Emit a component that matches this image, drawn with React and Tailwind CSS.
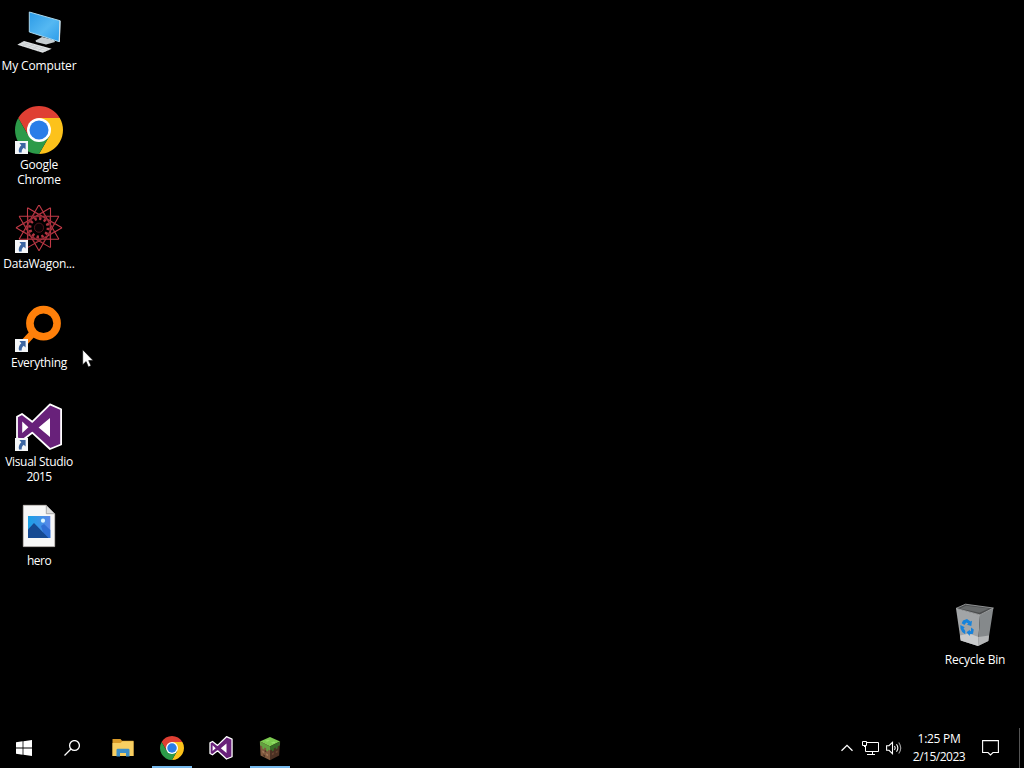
import React from "react";

const FONT = "font-['Open_Sans','Noto_Sans',sans-serif]";

function Computer() {
  return (
    <svg viewBox="0 0 48 48" className="size-12">
      <defs>
        <linearGradient id="screen" x1="0" y1="0" x2="1" y2="1">
          <stop offset="0" stopColor="#2b9ae6" />
          <stop offset=".55" stopColor="#55b8f2" />
          <stop offset="1" stopColor="#2a9bea" />
        </linearGradient>
      </defs>
      <path d="M20.5 33.5 L27 30 L39 33 L40 35 L31 37.5 L21 35Z" fill="#c6cdd1" />
      <path d="M14.3 5 L45 13.7 L44.3 34.7 L14.3 25Z" fill="url(#screen)" stroke="#a9d7ee" strokeWidth="1" />
      <path d="M45 13.7 L44.3 34.7" stroke="#d6e3ea" strokeWidth="1.2" />
      <path d="M9 34 L36.7 41.7 L27.7 45.7 L2.3 37.7Z" fill="#dfe2e4" />
      <path d="M6.8 35.2 L33.8 43 M4.5 36.5 L30.8 44.4 M14 35.5 L7.5 39.2 M19 37 L12.5 40.8 M24 38.2 L17.5 42.4 M29 39.7 L22.5 44" stroke="#b9bec1" strokeWidth=".5" />
    </svg>
  );
}

function Chrome({ className }) {
  return (
    <svg viewBox="0 0 48 48" className={className}>
      <path d="M3.22 12 A24 24 0 0 1 44.78 12 L24 12 L13.61 30Z" fill="#df3f33" />
      <path d="M44.78 12 A24 24 0 0 1 24 48 L34.39 30 L24 12Z" fill="#fcc21b" />
      <path d="M24 48 A24 24 0 0 1 3.22 12 L13.61 30 L34.39 30Z" fill="#2c9a49" />
      <circle cx="24" cy="24" r="12" fill="#fff" />
      <circle cx="24" cy="24" r="9.5" fill="#2a7de8" />
    </svg>
  );
}

function ring(count, skip, radius, turn) {
  const at = (i) => {
    const a = ((i + turn) * 2 * Math.PI) / count;
    return `${(24 + radius * Math.cos(a)).toFixed(2)} ${(22.7 + radius * Math.sin(a)).toFixed(2)}`;
  };
  return Array.from({ length: count }, (_, i) => `M${at(i)} L${at(i + skip)}`).join(" ");
}

function DataWagon() {
  return (
    <svg viewBox="0 0 48 48" className="size-12" fill="none">
      <path d={ring(12, 4, 23, 0)} stroke="#c23a47" strokeWidth="1.1" />
      <path d={ring(12, 3, 15.5, 0.5)} stroke="#8a2530" strokeWidth=".7" />
      <circle cx="24" cy="22.7" r="9.2" stroke="#b03340" strokeWidth="3" strokeDasharray="2.4 2.4" />
      <circle cx="24" cy="22.7" r="4.6" fill="#0b0204" stroke="#7d1f2b" strokeWidth=".6" />
    </svg>
  );
}

function Everything() {
  return (
    <svg viewBox="0 0 48 48" className="size-12" fill="none" stroke="#ff800a">
      <path d="M19 28 L6 42" strokeWidth="7" />
      <circle cx="28.5" cy="19.2" r="13.6" strokeWidth="7.6" />
    </svg>
  );
}

function VisualStudio({ className, edge = 1.8 }) {
  return (
    <svg viewBox="0 0 48 48" className={className}>
      <path
        fillRule="evenodd"
        d="M35 1.4 L46.1 6.3 V41.5 L35 46 L17.2 29.7 L7 37.5 L2 35 V13.8 L7 11 L17.2 18.8Z"
        fill="#68217a" stroke="#fff" strokeWidth={edge} strokeLinejoin="round"
      />
      <path d="M7.2 18.4 V30 L13.4 24.3Z M35 15 V34 L23.6 24.6Z" fill="#fff" />
    </svg>
  );
}

function ImageFile() {
  return (
    <svg viewBox="0 0 48 48" className="size-12">
      <defs>
        <linearGradient id="sky" x1="0" x2="1">
          <stop offset="0" stopColor="#19a1e6" />
          <stop offset="1" stopColor="#5a86e8" />
        </linearGradient>
      </defs>
      <path d="M8.3 3.3 H31.3 L39.7 11.7 V44.6 H8.3Z" fill="#f7f7f7" stroke="#cfc9c4" strokeWidth=".7" />
      <path d="M31.3 3.3 V11.7 H39.7Z" fill="#dedede" stroke="#8f8f8f" strokeWidth=".7" />
      <rect x="13" y="14" width="22.3" height="22" fill="url(#sky)" />
      <path d="M26 24 L29 22 L35.3 28 V36 H30Z" fill="#2f6fd4" />
      <path d="M13 27.5 L19 21 L33.5 36 H13Z" fill="#164a92" />
      <circle cx="28" cy="18.7" r="2.1" fill="#d8f4ff" />
    </svg>
  );
}

function RecycleBin() {
  return (
    <svg viewBox="0 0 48 48" className="size-12">
      <path d="M5 7.4 L14.5 3.2 L42.4 7 L29 13.9Z" fill="#4b4d4e" />
      <path d="M9 7.6 L15 4.8 L38 7.6 L28.5 11.8Z" fill="#66696a" />
      <path d="M5 7.4 L29 13.9 L27 45 L9.7 39.5Z" fill="#a2a5a7" />
      <path d="M29 13.9 L42.4 7 L37.3 40 L27 45Z" fill="#85898b" />
      <path d="M9 34.5 L18 32.4 L27.6 36 L27 45 L9.7 39.5Z" fill="#c9cbcc" />
      <path d="M27.6 36 L38 34.5 L37.3 40 L27 45Z" fill="#b4b6b7" />
      <path d="M5 7.4 L14.5 3.2 L42.4 7 L29 13.9Z" fill="none" stroke="#a9acad" strokeWidth=".8" />
      <g fill="#1683dc">
        <path d="M12 19.5 L16 18 L19.5 20.5 L21 19.8 L20.3 25 L16 23.8 L17.3 22.6 L15.3 21.4 L13.4 24 L10.7 22.3Z" />
        <path d="M9.3 24 L13.8 26.3 L12.5 27.2 L14.3 30 L14.2 33.3 L11.2 31 L9.5 27.6Z" />
        <path d="M20 26.4 L22.8 28.5 L22 32.8 L18.8 33.3 V35 L15.5 31.3 L18.8 28.7 V30.2 L20 30Z" />
      </g>
    </svg>
  );
}

function ShortcutArrow() {
  return (
    <svg viewBox="0 0 13 13" className="absolute bottom-0 left-0 size-[13px]">
      <rect width="13" height="13" fill="#f4f6f8" />
      <path d="M4.4 2 H10.6 V8.4 L8.7 6.7 C7.2 8 6.6 9.4 6.7 11.4 H4 C3.2 8.4 4.3 6.2 6.3 4.3Z" fill="#3c66a2" />
    </svg>
  );
}

function DesktopItem({ icon, lines, shortcut }) {
  return (
    <div className="flex h-[99px] w-[78px] shrink-0 flex-col items-center pt-[7px]">
      <div className="relative size-12">
        {icon}
        {shortcut && <ShortcutArrow />}
      </div>
      <div className="mt-[3px] flex flex-col items-center text-[12px] leading-[15px] whitespace-nowrap text-white">
        {lines.map(([text, tracking]) => (
          <span key={text} className={tracking}>{text}</span>
        ))}
      </div>
    </div>
  );
}

function WindowsLogo() {
  return (
    <svg viewBox="0 0 16 16" className="size-4" fill="#fff">
      <path d="M0 2.2 L6.6 1.3 V7.6 H0Z M7.4 1.2 L16 0 V7.6 H7.4Z M0 8.4 H6.6 V14.7 L0 13.8Z M7.4 8.4 H16 V16 L7.4 14.8Z" />
    </svg>
  );
}

function SearchIcon() {
  return (
    <svg viewBox="0 0 16 16" className="size-4" fill="none" stroke="#fff" strokeWidth="1.3">
      <circle cx="10.5" cy="5.5" r="4.9" />
      <path d="M7 9 L.5 15.5" />
    </svg>
  );
}

function Explorer() {
  return (
    <svg viewBox="0 0 22 18" className="h-[18px] w-[22px]">
      <path d="M.5 0 H8.5 L10 1.8 H21.5 V17 H.5Z" fill="#d99a28" />
      <path d="M.5 4 H8.5 L10.5 2.2 H21.5 V17 H.5Z" fill="#f8cf62" />
      <path d="M4.5 17.5 V11 Q4.5 9.7 5.8 9.7 H16.2 Q17.5 9.7 17.5 11 V17.5 H14 V14 H8 V17.5Z" fill="#3d8fc8" />
    </svg>
  );
}

function GrassBlock() {
  return (
    <svg viewBox="0 0 24 26" className="h-[25px] w-6">
      <path d="M12 1 L22.5 5.8 L12 11 L1.5 5.8Z" fill="#7ccb50" />
      <path d="M1.5 5.8 L12 11 V25.3 L2.2 20.3Z" fill="#80593f" />
      <path d="M22.5 5.8 L12 11 V25.3 L21.5 20.3Z" fill="#4a3023" />
      <path d="M1.5 5.8 L12 11 V15 L10 14 V16 L8 15 V12.8 L6 12 V14 L4 13 V10.8 L1.6 9.6Z" fill="#63a240" />
      <path d="M22.5 5.8 L12 11 V15 L14 14 V16.2 L16 15 V13 L18 12 V14 L20 12.8 V10.8 L22.4 9.6Z" fill="#386b27" />
      <path d="M4 15 L6 16 V18 L4 17Z M8 18 L10 19 V21 L8 20Z" fill="#a27a5c" />
      <path d="M5 19 L7 20 V22 L5 21Z M6.5 14.5 L8 15.3 V17 L6.5 16.2Z" fill="#4c3526" />
      <path d="M14 18 L16 17 V19 L14 20Z M18 16 L20 15 V17 L18 18Z" fill="#6b4632" />
      <path d="M7 5 L10 3.8 L12 4.8 L9 6Z M13 7 L16 5.8 L18 6.8 L15 8Z" fill="#92df68" />
    </svg>
  );
}

function TaskButton({ children, active }) {
  return (
    <div className="flex h-10 w-[49px] flex-col items-center">
      <div className="flex h-[38px] items-center pt-[2px]">{children}</div>
      <div className={active ? "h-[2px] w-10 bg-[#76b9ed]" : "h-[2px] w-10"} />
    </div>
  );
}

function Tray() {
  return (
    <div className="ml-auto flex h-10 items-center text-white">
      <svg viewBox="0 0 12 8" className="mr-[9px] h-2 w-3" fill="none" stroke="#fff" strokeWidth="1.3">
        <path d="M.5 6.8 L6 1.3 L11.5 6.8" />
      </svg>
      <svg viewBox="0 0 17 14" className="mr-[7px] h-[14px] w-[17px]" fill="none" stroke="#fff">
        <path d="M5 1.5 H16.5 V10.5 H3.5 V5 M10.5 10.5 V13.5 M5 13.5 H13 M.5 .5 H4.5 V4.5 H.5Z M2.5 4.5 V6" />
      </svg>
      <svg viewBox="0 0 17 14" className="mr-2 h-[14px] w-[17px]" fill="none" stroke="#fff" strokeWidth="1.1">
        <path d="M.6 4.7 H3 L6.5 1.3 V12.7 L3 9.3 H.6Z" />
        <path d="M8.5 5 Q10 7 8.5 9 M10.5 3.3 Q13.2 7 10.5 10.7" />
        <path d="M12.7 1.5 Q16.8 7 12.7 12.5" stroke="#a0a0a0" />
      </svg>
      <div className="flex w-[56px] flex-col items-center text-[12px] leading-[18px] whitespace-nowrap">
        <span className="tracking-[-0.3px]">1:25 PM</span>
        <span className="tracking-[-0.5px]">2/15/2023</span>
      </div>
      <svg viewBox="0 0 17 16" className="ml-[15px] h-4 w-[17px]" fill="none" stroke="#fff" strokeWidth="1.1">
        <path d="M.6 .6 H16.4 V12.5 H11 L8.5 15 L6 12.5 H.6Z" />
      </svg>
      <div className="ml-5 h-10 w-px bg-[#555]" />
      <div className="w-1" />
    </div>
  );
}

const ITEMS = [
  { icon: <Computer />, lines: [["My Computer", "tracking-[-0.15px]"]] },
  { icon: <Chrome className="size-12" />, lines: [["Google", "tracking-[-0.25px]"], ["Chrome", "tracking-[-0.25px]"]], shortcut: true },
  { icon: <DataWagon />, lines: [["DataWagon...", "tracking-[-0.28px]"]], shortcut: true },
  { icon: <Everything />, lines: [["Everything", "tracking-[-0.3px]"]], shortcut: true },
  { icon: <VisualStudio className="size-12" />, lines: [["Visual Studio", "tracking-[-0.33px]"], ["2015", "tracking-[-0.6px]"]], shortcut: true },
  { icon: <ImageFile />, lines: [["hero", "tracking-[-0.5px]"]] },
];

export default function App() {
  return (
    <div className={`relative flex h-[768px] w-[1024px] flex-col overflow-hidden bg-black ${FONT}`}>
      <main className="flex h-[728px] justify-between">
        <div className="flex flex-col">
          {ITEMS.map((item) => <DesktopItem key={item.lines[0][0]} {...item} />)}
        </div>
        <div className="flex flex-col pt-[594px] pr-[10px]">
          <DesktopItem icon={<RecycleBin />} lines={[["Recycle Bin", "tracking-[-0.2px]"]]} />
        </div>
      </main>
      <footer className="flex h-10 items-center">
        <div className="flex h-10 w-12 items-center justify-center"><WindowsLogo /></div>
        <div className="flex h-10 w-12 items-center justify-center"><SearchIcon /></div>
        <div className="ml-[2px] flex">
          <TaskButton><Explorer /></TaskButton>
          <TaskButton active><Chrome className="size-6" /></TaskButton>
          <TaskButton><VisualStudio className="size-6" edge={2.6} /></TaskButton>
          <TaskButton active><GrassBlock /></TaskButton>
        </div>
        <Tray />
      </footer>
      <svg viewBox="0 0 12 19" className="absolute top-[349px] left-[82px] h-[19px] w-3">
        <path d="M.7 .7 V15.8 L4.1 12.6 L6.4 17.9 L9 16.8 L6.7 11.6 H11.2Z" fill="#fff" stroke="#000" strokeWidth=".6" />
      </svg>
    </div>
  );
}
